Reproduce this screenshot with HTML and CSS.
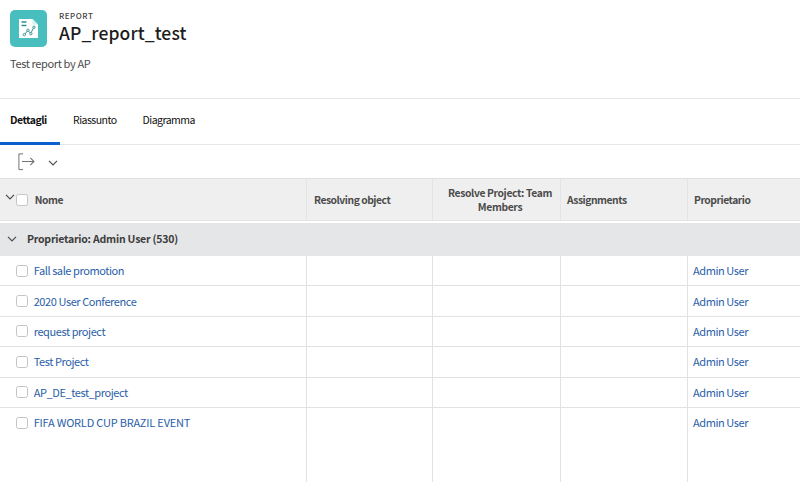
FILE: index.html
```html
<!DOCTYPE html>
<html lang="it">
<head>
<meta charset="utf-8">
<title>AP_report_test</title>
<link rel="stylesheet" href="styles.css">
</head>
<body>
<header class="page-header">
  <div class="heading">
    <svg class="logo" viewBox="0 0 37 37" width="37" height="37">
      <rect width="37" height="37" rx="5" fill="#48bfbe"/>
      <path d="M9 9h13.500l5.500 5.500V28H9z" fill="#fff"/>
      <path d="M22.500 9v5.500H28z" fill="#d5f0f0"/>
      <path d="M11.500 12.100h5M11.500 15.500h5" stroke="#368f91" stroke-width="1.500"/>
      <path d="M14.500 24.500l3.300-4 3 2.900 3.100-6.300" fill="none" stroke="#368f91" stroke-width="1"/>
      <g fill="#fff" stroke="#368f91" stroke-width=".9"><circle cx="14.300" cy="24.700" r="1.200"/><circle cx="17.900" cy="20.300" r="1.200"/><circle cx="20.900" cy="23.700" r="1.200"/><circle cx="24" cy="17.200" r="1.200"/></g>
    </svg>
    <div class="titles">
      <div class="eyebrow"><span>REPORT</span></div>
      <h1><span>AP_report_test</span></h1>
    </div>
  </div>
  <p class="description"><span>Test report by AP</span></p>
</header>
<nav class="tabs">
  <a class="tab active"><span>Dettagli</span></a>
  <a class="tab"><span>Riassunto</span></a>
  <a class="tab"><span>Diagramma</span></a>
</nav>
<div class="toolbar">
  <svg class="export" viewBox="0 0 18 18" width="18" height="18" fill="none" stroke="#737373"><path d="M5 .9H.9v15.700H5"/><path d="M4 8.500h12M12.300 4.800L16 8.500l-3.700 3.700" stroke-width="1.100"/></svg>
  <svg class="caret" viewBox="0 0 10 6" width="10" height="6"><path d="M1 .8l4 4 4-4"/></svg>
</div>
<main class="grid">
  <div class="row head">
    <div class="cell name"><svg class="chev" viewBox="0 0 10 6" width="10" height="6"><path d="M1 .8l4 4 4-4"/></svg><i class="check"></i><span>Nome</span></div>
    <div class="cell"><span>Resolving object</span></div>
    <div class="cell center"><div><span>Resolve Project: Team</span><br><span>Members</span></div></div>
    <div class="cell"><span>Assignments</span></div>
    <div class="cell"><span>Proprietario</span></div>
  </div>
  <div class="group"><svg class="chev" viewBox="0 0 10 6" width="10" height="6"><path d="M1 .8l4 4 4-4"/></svg><span>Proprietario: Admin User (530)</span></div>
  <div class="row"><div class="cell name"><i class="check"></i><a>Fall sale promotion</a></div><div class="cell"></div><div class="cell"></div><div class="cell"></div><div class="cell"><a>Admin User</a></div></div>
  <div class="row"><div class="cell name"><i class="check"></i><a>2020 User Conference</a></div><div class="cell"></div><div class="cell"></div><div class="cell"></div><div class="cell"><a>Admin User</a></div></div>
  <div class="row"><div class="cell name"><i class="check"></i><a>request project</a></div><div class="cell"></div><div class="cell"></div><div class="cell"></div><div class="cell"><a>Admin User</a></div></div>
  <div class="row"><div class="cell name"><i class="check"></i><a>Test Project</a></div><div class="cell"></div><div class="cell"></div><div class="cell"></div><div class="cell"><a>Admin User</a></div></div>
  <div class="row"><div class="cell name"><i class="check"></i><a>AP_DE_test_project</a></div><div class="cell"></div><div class="cell"></div><div class="cell"></div><div class="cell"><a>Admin User</a></div></div>
  <div class="row last"><div class="cell name"><i class="check"></i><a class="caps">FIFA WORLD CUP BRAZIL EVENT</a></div><div class="cell"></div><div class="cell"></div><div class="cell"></div><div class="cell"><a>Admin User</a></div></div>
  <div class="row filler"><div class="cell"></div><div class="cell"></div><div class="cell"></div><div class="cell"></div><div class="cell"></div></div>
</main>
</body>
</html>
```
FILE: styles.css
```css
* { box-sizing: border-box; }
body {
  margin: 0;
  width: 800px;
  height: 482px;
  overflow: hidden;
  background: #fff;
  color: #444;
  font: 11px/14px "Noto Sans CJK SC", "Noto Sans", sans-serif;
  white-space: nowrap;
}
svg { display: block; flex: none; }
.page-header { height: 99px; padding: 10px 10px 0; border-bottom: 1px solid #e6e6e6; }
.heading { display: flex; gap: 12px; height: 37px; }
.eyebrow { font-size: 8px; line-height: 11px; letter-spacing: .5px; font-weight: 500; color: #444; }
h1 { margin: 0; font-size: 17.5px; line-height: 24px; letter-spacing: .1px; font-weight: 500; color: #1c1c1c; }
.description { margin: 9px 0 0; color: #4b4b4b; letter-spacing: -.37px; }
.tabs { display: flex; height: 46px; border-bottom: 1px solid #e6e6e6; }
.tab { height: 46px; padding: 14px 13px 0; color: #111; font-size: 10.5px; letter-spacing: -.52px; }
.tab.active { width: 60px; padding-left: 10px; padding-right: 0; font-weight: 700; border-bottom: 3px solid #0d5fd0; }
.toolbar { display: flex; height: 33px; padding: 8px 0 0 18px; }
.caret { margin: 7px 0 0 12px; }
.caret path, .chev path { fill: none; stroke: #4b4b4b; stroke-width: 1.2; }
.grid { border-top: 1px solid #e0e0e0; }
.row { display: grid; grid-template-columns: 307px 126px 128px 127px 1fr; height: 30.4px; letter-spacing: -.42px; }
.cell { display: flex; align-items: center; padding-left: 5px; border-right: 1px solid #e1e2e4; border-bottom: 1px solid #e1e2e4; }
.cell:last-child { border-right: 0; }
.cell.name { padding-left: 16px; }
.check { flex: none; width: 12px; height: 12px; margin-right: 5.700px; border: 1px solid #c4c4c4; border-radius: 2.5px; background: #fff; }
a { color: #2a5ea8; }
.cell a { padding-bottom: 1px; }
.caps { letter-spacing: -.2px; }
.head { height: 42px; background: #efefef; font-size: 10.3px; font-weight: 700; color: #4b4b4b; letter-spacing: -.46px; }
.head .cell { border-color: #e4e4e4; padding: 0 0 0 7px; }
.head .cell:nth-child(n+4) { padding-left: 6px; }
.head .cell.name { padding-left: 5px; }
.head .chev { margin: -6px 1px 0 0; }
.head .check { margin-right: 6.700px; }
.head .cell.center { justify-content: center; text-align: center; padding-left: 7px; letter-spacing: -.36px; }
.group { display: flex; align-items: center; height: 33px; margin-top: 2px; padding-left: 7px; background: #e5e6e8; font-size: 10.5px; font-weight: 700; color: #3c3c3c; letter-spacing: -.22px; }
.group .chev { margin-right: 10px; }
.group span, .group .chev { position: relative; top: -1px; }
.row.last .cell { border-bottom-color: transparent; }
.filler { height: 60px; }
.filler .cell { border-bottom: 0; }
```
